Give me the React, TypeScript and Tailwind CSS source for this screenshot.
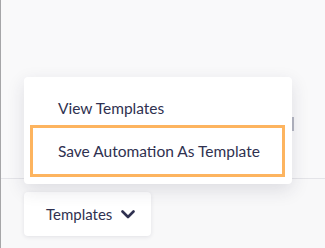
import React from "react";

export default function App() {
  return (
    <div
      className="relative w-[325px] h-[248px] overflow-hidden bg-[#f9f9fa] border-l border-[#a6a6a8] flex flex-col"
      style={{ fontFamily: "Lato, 'Noto Sans', sans-serif" }}
    >
      <div className="h-[178px] shrink-0" />
      <div className="flex-1 border-t border-[#e4e4e8] bg-[#f8f8f9] pl-[23px] pt-[13px]">
        <button className="flex items-center h-[44px] w-[127px] pl-[22px] bg-white rounded-[4px] shadow-[0_1px_4px_rgba(30,30,60,0.10)] text-[15px] text-[#2f3150]">
          <span className="leading-[20px]">Templates</span>
          <svg width="14" height="9" viewBox="0 0 14 9" className="ml-[9px]" fill="none">
            <path d="M1.5 1.5 L7 7 L12.5 1.5" stroke="#2f3150" strokeWidth="2.6" strokeLinecap="round" strokeLinejoin="round" />
          </svg>
        </button>
      </div>

      <div className="absolute left-[291px] top-[117px] w-[2px] h-[14px] bg-[#b4b6c2]" />

      <div className="absolute left-[23px] top-[77px] w-[268px] bg-white rounded-[4px] shadow-[0_6px_18px_rgba(40,40,70,0.13)] px-[6px] pb-[7px] text-[15.5px] text-[#2f3150]">
        <div className="h-[48px] pt-[21px] pl-[28px] leading-[20px]">View Templates</div>
        <div className="h-[52px] w-[255px] border-[3px] border-[#fdb45f] flex items-center pl-[25px] leading-[20px]">
          Save Automation As Template
        </div>
      </div>
    </div>
  );
}
